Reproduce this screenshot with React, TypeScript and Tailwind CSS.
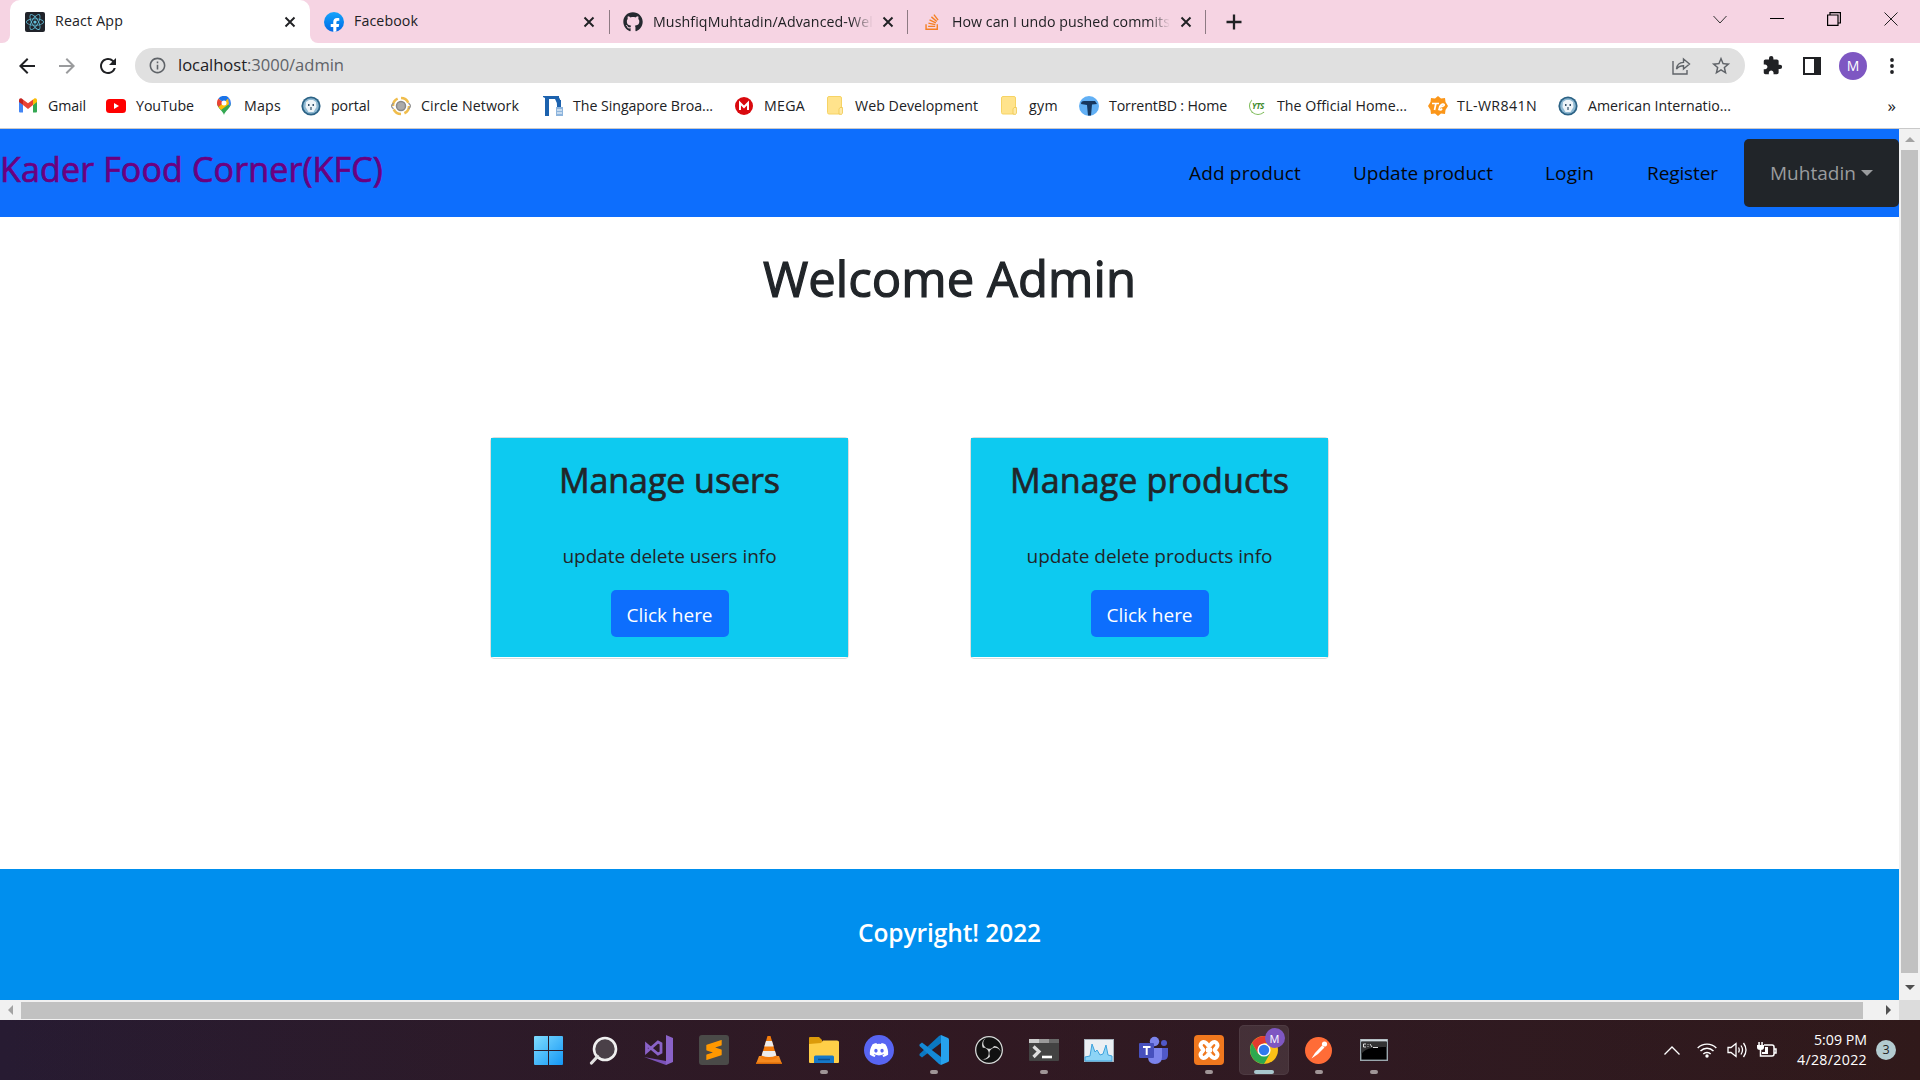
import React, { useLayoutEffect, useRef } from "react";
import { FaGithub, FaDiscord, FaStackOverflow, FaReact, FaFacebookF } from "react-icons/fa";
import { SiSublimetext, SiObsstudio } from "react-icons/si";
import { MdExtension, MdStarBorder, MdRefresh, MdArrowBack, MdArrowForward, MdInfoOutline } from "react-icons/md";

/* A single line of text whose tracking is adjusted to fill its slot. */
function Fit({ className = "", children }: { className?: string; children: string }) {
  const outer = useRef<HTMLSpanElement>(null);
  const inner = useRef<HTMLSpanElement>(null);
  useLayoutEffect(() => {
    const o = outer.current!;
    const i = inner.current!;
    i.style.letterSpacing = "0px";
    const gap = o.getBoundingClientRect().width - i.getBoundingClientRect().width;
    i.style.letterSpacing = `${gap / children.length}px`;
  }, [children]);
  return (
    <span ref={outer} className={`block shrink-0 whitespace-pre ${className}`}>
      <span ref={inner} className="inline-block">{children}</span>
    </span>
  );
}

function Close() {
  return (
    <svg className="size-3 shrink-0" viewBox="0 0 12 12" stroke="#202124" strokeWidth="1.9">
      <path d="M1.5 1.5l9 9M10.5 1.5l-9 9" />
    </svg>
  );
}

function TabStrip() {
  return (
    <div className="flex h-[43px] bg-[#f6d4e3] text-[14.2px] leading-none text-[#202124]">
      <div className="flex w-[10px] items-end bg-white">
        <div className="h-full w-full rounded-br-[8px] bg-[#f6d4e3]" />
      </div>
      <div className="w-[300px] bg-[#f6d4e3]">
        <div className="flex h-full items-center rounded-t-[10px] bg-white pr-[14px] pl-[15px]">
          <span className="grid size-5 place-items-center rounded-[2px] bg-[#20232a]">
            <FaReact className="size-[18px] text-[#61bdd8]" />
          </span>
          <Fit className="ml-[10px] w-[68px]">React App</Fit>
          <span className="ml-auto flex"><Close /></span>
        </div>
      </div>
      <div className="bg-white">
        <div className="flex h-full items-center rounded-bl-[8px] bg-[#f6d4e3]">
          <span className="ml-[14px] flex size-5 items-end justify-center overflow-hidden rounded-full bg-linear-to-b from-[#18a4fb] to-[#0866e4]">
            <FaFacebookF className="-mb-[2px] ml-[1px] size-4 text-white" />
          </span>
          <Fit className="ml-[10px] w-[64px]">Facebook</Fit>
          <span className="ml-[165px] flex"><Close /></span>
        </div>
      </div>
      <div className="ml-[14px] flex items-center">
        <div className="h-6 w-px bg-[#8d7a83]" />
        <FaGithub className="ml-[13px] size-5 text-[#24292f]" />
        <div className="ml-[10px] w-[220px] overflow-hidden mask-r-from-90%">
          <Fit className="w-[220px] leading-5">MushfiqMuhtadin/Advanced-Wel</Fit>
        </div>
        <span className="ml-[9px] flex"><Close /></span>
        <div className="ml-[13px] h-6 w-px bg-[#8d7a83]" />
        <span className="ml-[16px] flex w-4">
          <FaStackOverflow className="size-[18px] text-[#f48024]" />
        </span>
        <div className="ml-[12px] w-[218px] overflow-hidden mask-r-from-90%">
          <Fit className="w-[218px] leading-5">How can I undo pushed commits</Fit>
        </div>
        <span className="ml-[10px] flex"><Close /></span>
        <div className="ml-[13px] h-6 w-px bg-[#8d7a83]" />
        <svg className="ml-[20px] size-4" viewBox="0 0 16 16" stroke="#202124" strokeWidth="2.3">
          <path d="M8 0.5v15M0.5 8h15" />
        </svg>
      </div>
      <div className="mr-[22px] ml-auto flex h-[37px] items-center">
        <svg className="h-4 w-[14px]" viewBox="0 0 14 16" fill="none" stroke="#333">
          <path d="M0.5 5l6.5 7 6.5-7" />
        </svg>
        <div className="ml-[43px] h-px w-[14px] bg-black" />
        <svg className="ml-[43px] h-[14px] w-[14px]" viewBox="0 0 14 14" fill="none" stroke="#000" strokeWidth="1.2">
          <path d="M0.6 3h10.4v10.4H0.6zM3 3V0.6h10.4v10.4H11" />
        </svg>
        <svg className="ml-[43px] size-[14px]" viewBox="0 0 14 14" stroke="#222">
          <path d="M0.5 0.5l13 13M13.5 0.5l-13 13" />
        </svg>
      </div>
    </div>
  );
}

function Toolbar() {
  return (
    <div className="flex h-[45px] items-center bg-white pl-[15px] text-[#202124]">
      <MdArrowBack className="size-6" />
      <MdArrowForward className="ml-4 size-6 text-[#9a9b9d]" />
      <MdRefresh className="ml-[17px] size-6" />
      <div className="ml-[15px] flex h-[35px] w-[1610px] items-center rounded-full bg-[#e0e0e0] px-[13px]">
        <MdInfoOutline className="size-[19px] text-[#5f6368]" />
        <Fit className="ml-[11px] w-[69px] text-[16.6px]">localhost</Fit>
        <Fit className="w-[97px] text-[16.6px] text-[#5f6368]">:3000/admin</Fit>
        <svg className="ml-auto size-[19px]" viewBox="0 0 19 19" fill="none" stroke="#5f6368" strokeWidth="1.4">
          <path d="M1 5v13h14v-4M4.5 13c.4-4 3-6.5 7-6.6V3l6 5-6 5V9.7C8.500 9.700 6.200 10.500 4.500 13z" />
        </svg>
        <MdStarBorder className="ml-[19px] size-[22px] text-[#5f6368]" />
      </div>
      <MdExtension className="ml-[17px] size-[21px]" />
      <div className="ml-[20px] h-[18px] w-[18px] border-2 border-r-[7px] border-[#202124]" />
      <div className="ml-[18px] grid size-7 place-items-center rounded-full bg-[#7e57c2] text-[14px] text-white">M</div>
      <svg className="ml-[23px] h-[18px] w-1" viewBox="0 0 4 18" fill="#202124">
        <circle cx="2" cy="3" r="1.9" /><circle cx="2" cy="9" r="1.9" /><circle cx="2" cy="15" r="1.9" />
      </svg>
    </div>
  );
}

function Seal() {
  return (
    <svg className="size-5" viewBox="0 0 20 20">
      <circle cx="10" cy="10" r="9.600" fill="#2b6285" />
      <circle cx="10" cy="10" r="7.800" fill="#8fb9d2" />
      <path d="M5 6l3-2h4l3 2 .500 5-3 5h-5l-3-5z" fill="#eef4f8" />
      <path d="M7 8h1.500v2H7zM11.500 8H13v2h-1.500zM9.400 11h1.200v3H9.400z" fill="#35526a" />
    </svg>
  );
}

function Folder() {
  return (
    <svg className="h-[19px] w-4" viewBox="0 0 16 19">
      <rect x=".5" y=".5" width="14" height="17.500" rx="1.500" fill="#ffe38c" stroke="#f6d365" />
      <path d="M12 18v-5l1-1.500h2.500V17l-1 1.500z" fill="#ffe9a5" stroke="#efc84f" strokeWidth=".8" />
    </svg>
  );
}

function Bookmarks() {
  return (
    <div className="flex h-[41px] items-center border-b border-[#c9c9c9] bg-white pb-[5px] pl-[19px] text-[14.2px] leading-5 text-[#202124]">
      <svg className="h-[15px] w-[18px]" viewBox="0 0 18 15">
        <path d="M0 2v11.500a1 1 0 001 1h3V7z" fill="#4285f4" />
        <path d="M18 2v11.500a1 1 0 01-1 1h-3V7z" fill="#34a853" />
        <path d="M14 7V1.500l1-.8c1.500-1 3 0 3 1.500V4z" fill="#fbbc04" />
        <path d="M4 7V1.500L9 5.300l5-3.800V7l-5 4z" fill="#ea4335" />
        <path d="M0 4V2.200C0 .7 1.500-.3 3 .7l1 .8V7z" fill="#c5221f" />
      </svg>
      <Fit className="ml-[11px] w-[38px]">Gmail</Fit>
      <svg className="ml-[20px] h-[14px] w-5" viewBox="0 0 20 14">
        <rect width="20" height="14" rx="3.500" fill="#f00" /><path d="M8 4l5 3-5 3z" fill="#fff" />
      </svg>
      <Fit className="ml-[10px] w-[58px]">YouTube</Fit>
      <svg className="ml-[23px] h-[19px] w-[14px]" viewBox="0 0 14 19">
        <path d="M7 19C6.200 15 0 12 0 7h14c0 5-6.200 8-7 12z" fill="#34a853" />
        <path d="M7 0a7 7 0 017 7l-.7 3L7 7z" fill="#4285f4" />
        <path d="M1.500 2.500L7 7l-5.500 4C.5 9.500 0 8.500 0 7c0-1.800.5-3.200 1.500-4.500z" fill="#ea4335" />
        <path d="M1.500 11L11 2.500 12 8 4 14z" fill="#fbbc04" />
        <path d="M1.500 2.500A7 7 0 0111.500 1.500L7 7z" fill="#1a73e8" />
        <circle cx="7" cy="7" r="2.500" fill="#fff" />
      </svg>
      <Fit className="ml-[13px] w-[37px]">Maps</Fit>
      <span className="ml-[20px]"><Seal /></span>
      <Fit className="ml-[10px] w-[39px]">portal</Fit>
      <svg className="ml-[21px] size-5" viewBox="0 0 20 20" fill="none">
        <circle cx="10" cy="10" r="8" stroke="#f0bd4c" strokeWidth="2.500" strokeDasharray="9 3.500" />
        <circle cx="10" cy="10" r="4.500" fill="#aaa" stroke="#888" strokeWidth="1.500" />
        <path d="M2.500 7L0 10l2.500 3M17.500 7l2.500 3-2.500 3" stroke="#999" strokeWidth="1.300" />
      </svg>
      <Fit className="ml-[10px] w-[98px]">Circle Network</Fit>
      <svg className="ml-[24px] size-5" viewBox="0 0 20 20">
        <path d="M0 0h16v1.500Q18 4 18 10h-4Q14 6 12.500 4L12 3H5v17H2V2L0 1z" fill="#1c62ae" />
        <path d="M2 3h4v17H2zM14 4h4v7h-4z" fill="#1c62ae" />
        <path d="M13 11h7v9h-7z" fill="#8db4dc" /><path d="M14 14h5M14 17h5" stroke="#fff" strokeWidth="1.200" />
      </svg>
      <Fit className="ml-[10px] w-[140px]">The Singapore Broa...</Fit>
      <svg className="ml-[22px] size-[18px]" viewBox="0 0 18 18">
        <circle cx="9" cy="9" r="9" fill="#d9090e" /><path d="M5 13V6l4 4 4-4v7" fill="none" stroke="#fff" strokeWidth="2" />
      </svg>
      <Fit className="ml-[11px] w-[41px]">MEGA</Fit>
      <span className="ml-[22px]"><Folder /></span>
      <Fit className="ml-[12px] w-[123px]">Web Development</Fit>
      <span className="ml-[23px]"><Folder /></span>
      <Fit className="ml-[12px] w-[29px]">gym</Fit>
      <svg className="ml-[21px] size-5" viewBox="0 0 20 20">
        <circle cx="10" cy="10" r="10" fill="#62b0f5" /><path d="M2 8q0-3 3-3h11l2 3-5 .5-1 11H9L8 9z" fill="#17375e" />
      </svg>
      <Fit className="ml-[10px] w-[118px]">TorrentBD : Home</Fit>
      <div className="ml-[22px] grid size-[18px] place-items-center rounded-full border-[1.5px] border-t-transparent border-[#7dbb58] border-r-transparent">
        <span className="text-[8px] leading-none font-bold tracking-tighter text-[#3d8a2b] italic">YTS</span>
      </div>
      <Fit className="ml-[10px] w-[130px]">The Official Home...</Fit>
      <svg className="ml-[21px] size-5" viewBox="0 0 20 20">
        <path d="M10 0l3 2.500 4-.5.500 4L20 10l-2.500 4-.5 4-4-.5L10 20l-3-2.500-4 .5-.5-4L0 10l2.500-4L3 2l4 .5z" fill="#fb9619" />
        <path d="M4 7.500h7M8 7l-1.500 7M12 10l-1 3.500q2 1 3-1M12 10q3-3 4-1.500t-4 2.500" stroke="#fff" strokeWidth="1.700" fill="none" />
      </svg>
      <Fit className="ml-[9px] w-[80px]">TL-WR841N</Fit>
      <span className="ml-[21px]"><Seal /></span>
      <Fit className="ml-[10px] w-[143px]">American Internatio...</Fit>
      <span className="mr-[24px] ml-auto text-[17px]">»</span>
    </div>
  );
}

function Card({ title, text, titleClass, textClass }: { title: string; text: string; titleClass: string; textClass: string }) {
  return (
    <div className="flex h-[222px] w-[359px] flex-col items-center rounded-[4px] border border-[#dcdcdc] bg-white pb-px">
      <div className="flex w-full flex-1 flex-col items-center bg-[#0dcaf0] text-[#212529]">
        <Fit className={`mt-[18px] text-[34px] leading-[48px] [-webkit-text-stroke:0.7px] ${titleClass}`}>{title}</Fit>
        <Fit className={`mt-[37px] text-[19px] leading-[30px] ${textClass}`}>{text}</Fit>
        <button className="mt-[19px] flex h-[47px] w-[118px] items-center justify-center rounded-[5px] bg-[#0d6efd] text-[19px] text-white">
          <Fit className="w-[86px] pt-[3px]">Click here</Fit>
        </button>
      </div>
    </div>
  );
}

function Page() {
  return (
    <div className="w-[1899px] bg-white">
      <nav className="flex h-[88px] items-center bg-[#0d6efd] text-[19px] text-[#05070a]">
        <Fit className="w-[383px] pb-[7px] text-[34px] text-[#6b0080] [-webkit-text-stroke:0.7px]">Kader Food Corner(KFC)</Fit>
        <Fit className="ml-auto w-[112px] pt-px">Add product</Fit>
        <Fit className="ml-[52px] w-[140px] pt-px">Update product</Fit>
        <Fit className="ml-[52px] w-[49px] pt-px">Login</Fit>
        <Fit className="ml-[53px] w-[71px] pt-px">Register</Fit>
        <div className="ml-[26px] flex h-[68px] w-[155px] items-center rounded-[5px] bg-[#212529] pl-[26px] text-[#9a9c9e]">
          <Fit className="w-[86px] pt-px">Muhtadin</Fit>
          <span className="mb-[1px] ml-[5px] border-x-[6px] border-t-[6px] border-x-transparent border-t-[#9a9c9e]" />
        </div>
      </nav>
      <main className="flex h-[652px] flex-col items-center">
        <h1 className="mt-[26px] flex text-[49px] leading-[70px] text-[#212529] [-webkit-text-stroke:1.2px]">
          <Fit className="w-[373px]">Welcome Admin</Fit>
        </h1>
        <div className="mt-[124px] flex gap-[121px] self-start pl-[490px]">
          <Card title="Manage users" text="update delete users info" titleClass="w-[221px]" textClass="w-[214px]" />
          <Card title="Manage products" text="update delete products info" titleClass="w-[279px]" textClass="w-[246px]" />
        </div>
      </main>
      <footer className="flex h-[131px] justify-center bg-[#008fee] pt-[46px] text-[24.5px] leading-9 font-semibold text-white">
        <Fit className="w-[183px]">Copyright! 2022</Fit>
      </footer>
    </div>
  );
}

function Dot({ kind }: { kind?: string }) {
  if (kind === "wide") return <span className="h-1 w-5 rounded-full bg-[#a9c8ce]" />;
  return <span className={`h-1 w-2 rounded-full ${kind ? "bg-[#a09597]" : "bg-transparent"}`} />;
}

function Slot({ children, dot, active }: { children: React.ReactNode; dot?: string; active?: boolean }) {
  return (
    <div className="flex w-[55px] justify-center pt-[5px]">
      <div className={`flex h-[50px] w-[50px] flex-col items-center rounded-[5px] ${active ? "border border-white/5 bg-white/10 pt-[4px]" : "pt-[5px]"}`}>
        <div className="grid h-10 w-10 place-items-center">{children}</div>
        <Dot kind={dot} />
      </div>
    </div>
  );
}

function XamppMark() {
  return (
    <svg className="size-6" viewBox="0 0 24 24" fill="none" stroke="#fff" strokeWidth="4" strokeLinejoin="round">
      <path d="M12 8.500L9.500 5.500Q7 3 4.800 4.800Q2.500 7 4.500 9.500L6.500 12L4.500 14.500Q2.500 17 4.800 19.200Q7 21 9.500 18.500L12 15.500L14.500 18.500Q17 21 19.200 19.200Q21.500 17 19.500 14.500L17.500 12L19.500 9.500Q21.500 7 19.200 4.800Q17 3 14.500 5.500z" />
      <path d="M9 12h6" strokeWidth="4.500" />
    </svg>
  );
}

function Taskbar() {
  return (
    <div className="flex h-[60px] shrink-0 bg-linear-to-r from-[#271b32] via-[#2a1d2a] to-[#30191a]">
      <div className="flex w-full bg-linear-to-r from-transparent via-[#35161d]/60 to-transparent pl-[521px] text-white">
        <Slot>
          <svg className="size-[29px]" viewBox="0 0 29 29">
            <defs><linearGradient id="win" x1="0" y1="0" x2="1" y2="1"><stop stopColor="#7fdcff" /><stop offset="1" stopColor="#1497f5" /></linearGradient></defs>
            <path d="M1 0h13v14H0V1q0-1 1-1zM15 0h13q1 0 1 1v13H15zM0 15h14v14H1q-1 0-1-1zM15 15h14v13q0 1-1 1H15z" fill="url(#win)" />
          </svg>
        </Slot>
        <Slot>
          <svg className="size-[29px]" viewBox="0 0 29 29">
            <circle cx="16" cy="13" r="11" fill="#4a4048" stroke="#f0f0f0" strokeWidth="2.600" />
            <path d="M8.500 20.500L2.500 27" stroke="#e0e0e0" strokeWidth="3.200" strokeLinecap="round" />
          </svg>
        </Slot>
        <Slot>
          <svg className="size-[30px]" viewBox="0 0 30 30">
            <path d="M22 0l7 3v24l-7 3z" fill="#8a62c8" />
            <path d="M0 22l22 4v4z" fill="#7b52b8" />
            <path d="M2.500 9.500L14 19l3-1.500v-9L14 7 2.500 17V9.500z" fill="none" stroke="#8a62c8" strokeWidth="2.800" />
          </svg>
        </Slot>
        <Slot>
          <span className="grid size-[30px] place-items-center rounded-[3px] bg-[#4a4a48]"><SiSublimetext className="size-5 text-[#ff9800]" /></span>
        </Slot>
        <Slot>
          <svg className="size-[30px]" viewBox="0 0 30 30">
            <path d="M5 21h20l3 8H2z" fill="#f58a1f" /><path d="M2 27.500h26V29H2z" fill="#d86a08" />
            <path d="M13.500 1h3L23 23q-8 4-16 0z" fill="#f47c0c" />
            <path d="M12 6h6l1.700 5.500h-9.400zM9 16h12l1.400 4.500q-7.400 3-14.800 0z" fill="#ececec" />
          </svg>
        </Slot>
        <Slot dot="on">
          <svg className="h-7 w-[30px]" viewBox="0 0 30 28">
            <path d="M0 2q0-1 1-1h9l3 3v6H0z" fill="#dc9b0a" />
            <path d="M0 8l12-1 2-2.500h14q2 0 2 1.500v20q0 1-1 1H1q-1 0-1-1z" fill="#ffcf48" />
            <path d="M5 27v-6q0-1.500 1.500-1.500h17Q25 19.500 25 21v6z" fill="#1678c8" /><path d="M9 23.500h12" stroke="#0b4f8e" strokeWidth="1.500" />
          </svg>
        </Slot>
        <Slot>
          <span className="grid size-[30px] place-items-center rounded-full bg-[#5865f2]"><FaDiscord className="size-5" /></span>
        </Slot>
        <Slot dot="on">
          <svg className="size-[30px]" viewBox="0 0 30 30">
            <path d="M22 8L3 22.500 0.500 20.500V19L20 1l2-1z" fill="#0b78c2" />
            <path d="M22 22L3 7.500.500 9.500V11L20 29l2 1z" fill="#1489d6" />
            <path d="M22 0l7 3q1 .5 1 1.500v21q0 1-1 1.500l-7 3z" fill="#26a2ee" />
          </svg>
        </Slot>
        <Slot>
          <span className="grid size-7 place-items-center rounded-full bg-[#111]"><SiObsstudio className="size-7 text-[#d8d8d8]" /></span>
        </Slot>
        <Slot dot="on">
          <svg className="h-[22px] w-[30px]" viewBox="0 0 30 22">
            <rect width="30" height="22" rx="1" fill="#434343" /><path d="M0 0h10v4H0z" fill="#ccc" /><path d="M10 0h10v4H10z" fill="#9a9a9a" /><path d="M20 0h10v4H20z" fill="#686868" />
            <path d="M4.500 7.500l5.500 5-5.500 5.500" fill="none" stroke="#ddd" strokeWidth="3.200" /><path d="M13 18h10" stroke="#fff" strokeWidth="2.600" />
          </svg>
        </Slot>
        <Slot>
          <svg className="h-[23px] w-[30px]" viewBox="0 0 30 23">
            <rect x=".5" y=".5" width="29" height="22" fill="#ebeff3" stroke="#a9b4bd" />
            <path d="M1 18l5-1L8 5l3 8 2-2 3 5 3-1 3-9 2 10 4 1v5H1z" fill="#8dd4f6" stroke="#3da2dc" />
          </svg>
        </Slot>
        <Slot>
          <svg className="size-[29px]" viewBox="0 0 29 29">
            <circle cx="15.500" cy="5.500" r="4.700" fill="#7b83eb" /><circle cx="25" cy="7" r="3" fill="#5059c9" />
            <path d="M20 12h9v7q0 5-5 5h-4z" fill="#5059c9" /><path d="M9 12h14v9q0 7-7 7t-7-7z" fill="#7b83eb" />
            <rect y="7" width="15" height="15" rx="1" fill="#4750bd" /><path d="M4 11h7.500M7.700 11v8" stroke="#fff" strokeWidth="2" />
          </svg>
        </Slot>
        <Slot dot="on">
          <span className="grid size-[30px] place-items-center rounded-[4px] bg-[#f0781e]"><XamppMark /></span>
        </Slot>
        <Slot dot="wide" active>
          <div className="relative">
            <svg className="size-7" viewBox="0 0 28 28">
              <circle cx="14" cy="14" r="14" fill="#fbc116" />
              <path d="M1.900 7A14 14 0 0126.100 7H14l-6 10.500z" fill="#e33b2e" />
              <path d="M1.900 7A14 14 0 0014 28l6-10.500H8z" fill="#2da94f" />
              <circle cx="14" cy="14" r="6.600" fill="#fff" /><circle cx="14" cy="14" r="5.200" fill="#3079ed" />
            </svg>
            <span className="absolute -top-[8px] left-[15px] grid size-5 place-items-center rounded-full bg-[#7e57c2] text-[11px] leading-none">M</span>
          </div>
        </Slot>
        <Slot dot="on">
          <svg className="size-[27px]" viewBox="0 0 27 27">
            <circle cx="13.500" cy="13.500" r="13.500" fill="#ff6c37" />
            <circle cx="19.500" cy="7" r="2.600" fill="#fff" /><path d="M17 8.500l2.500 2L13 17l-6.500 4.500L10 16z" fill="#fff" />
          </svg>
        </Slot>
        <Slot dot="on">
          <svg className="h-[22px] w-7" viewBox="0 0 28 22">
            <rect x=".7" y=".7" width="26.600" height="20.600" fill="#000" stroke="#9aa7ad" strokeWidth="1.400" />
            <path d="M1.400 3h25.200v5Q6 7 1.400 15z" fill="#333" /><path d="M1 1.500h26" stroke="#d0d8dc" strokeWidth="2" />
            <path d="M6 5H3.500v3H6M8 5v.8M8 7.200V8M10 5l2 3M13 8.500h5" stroke="#ddd" fill="none" />
          </svg>
        </Slot>
        <div className="mr-[24px] ml-auto flex items-center">
          <svg className="h-[9px] w-4" viewBox="0 0 16 9" fill="none" stroke="#fff" strokeWidth="1.300"><path d="M.5 8.500L8 1l7.500 7.500" /></svg>
          <svg className="ml-[17px] h-4 w-5" viewBox="0 0 20 16" fill="none" stroke="#fff" strokeWidth="1.400">
            <path d="M.7 6a13 13 0 0118.600 0M3.500 9a9 9 0 0113 0M6.300 12a5.200 5.200 0 017.400 0" /><circle cx="10" cy="14" r="1.700" fill="#fff" stroke="none" />
          </svg>
          <svg className="ml-[10px] h-[18px] w-5" viewBox="0 0 20 18" fill="none" stroke="#fff" strokeWidth="1.300">
            <path d="M1 6.500h3l5-4v13l-5-4H1zM11.500 6.500q1.500 2.500 0 5M14 4.500q3 4.500 0 9M16.500 2q5 7 0 14" />
          </svg>
          <svg className="ml-[10px] h-[18px] w-5" viewBox="0 0 20 18" fill="none" stroke="#fff" strokeWidth="1.500">
            <path d="M7 4h8q2 0 2 2v7q0 2-2 2H6M17.500 8H19v4h-1.500" /><path d="M0 4h7v2.500Q7 9 3.500 9T0 6.500zM1.300 1h1.500v3H1.300zM4.300 1h1.500v3H4.300zM8 6h3v7H5v-2h3z" fill="#fff" stroke="none" /><path d="M3.500 8v7H6" />
          </svg>
          <div className="ml-[20px] flex flex-col items-end text-[14.200px] leading-5">
            <Fit className="w-[53px]">5:09 PM</Fit>
            <Fit className="w-[70px]">4/28/2022</Fit>
          </div>
          <span className="ml-[9px] grid size-5 place-items-center rounded-full bg-[#b3cbd0] text-[12.500px] leading-none text-[#222]">3</span>
        </div>
      </div>
    </div>
  );
}

export default function App() {
  return (
    <div className="flex h-[1080px] w-[1920px] flex-col overflow-hidden font-['Open_Sans',sans-serif]">
      <TabStrip />
      <Toolbar />
      <Bookmarks />
      <div className="flex h-[871px] bg-white">
        <Page />
        <div className="flex w-[21px] flex-col items-center bg-[#f1f1f1]">
          <div className="flex h-[21px] items-center"><span className="border-x-[5px] border-b-[5px] border-x-transparent border-b-[#a3a3a3]" /></div>
          <div className="h-[823px] w-[17px] bg-[#c1c1c1]" />
          <div className="mt-[12px] border-x-[5px] border-t-[5px] border-x-transparent border-t-[#505050]" />
        </div>
      </div>
      <div className="flex h-5 items-center bg-[#f1f1f1]">
        <span className="ml-[8px] border-y-[5px] border-r-[5px] border-y-transparent border-r-[#a3a3a3]" />
        <div className="ml-[8px] h-[17px] w-[1842px] bg-[#c1c1c1]" />
        <span className="ml-[23px] border-y-[5px] border-l-[5px] border-y-transparent border-l-[#505050]" />
        <div className="ml-auto h-5 w-[21px] bg-[#dcdcdc]" />
      </div>
      <Taskbar />
    </div>
  );
}
